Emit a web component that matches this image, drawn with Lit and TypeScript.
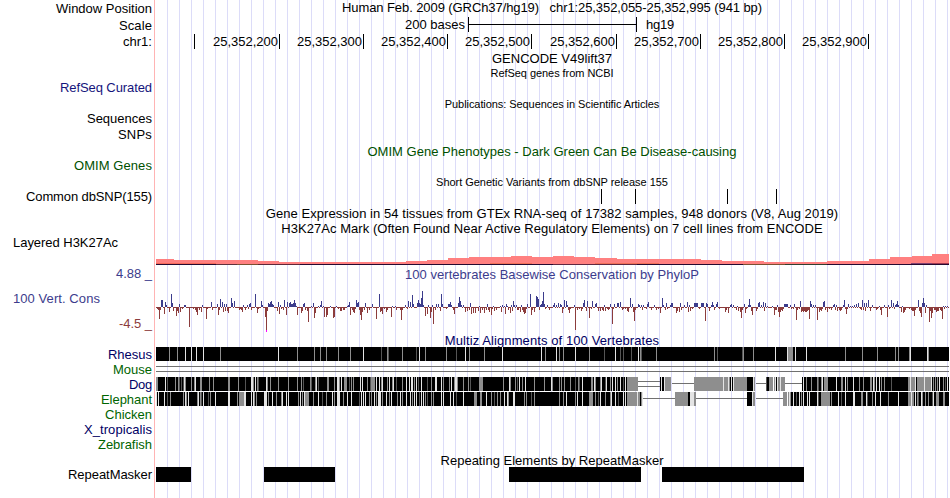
import { LitElement, html, svg, css, nothing } from "lit";
import { customElement } from "lit/decorators.js";

const FONT = '"Liberation Sans", Arial, sans-serif';
const LEFT = 156;
const RIGHT = 949;

const pen = document.createElement("canvas").getContext("2d")!;

/** Letter spacing that makes a text advance over the given width. */
function spacing(text: string, size: number, width: number): string {
  pen.font = `${size}px ${FONT}`;
  const natural = pen.measureText(text).width;
  return `letter-spacing:${((width - natural) / text.length).toFixed(4)}px`;
}

interface Row {
  h: number;
  label?: string;
  lw?: number;
  tone?: string;
  lt?: number;
  title?: string;
  tw?: number;
  small?: boolean;
  tt?: number;
  ttone?: string;
  kind?: string;
}

const ROWS: Row[] = [
  { h: 17, label: "Window Position", lw: 96, title: "Human Feb. 2009 (GRCh37/hg19)   chr1:25,352,055-25,352,995 (941 bp)", tw: 420, tt: -1 },
  { h: 16, label: "Scale", lw: 33, lt: 1, kind: "scale" },
  { h: 17, label: "chr1:", lw: 29, lt: 1, kind: "ruler" },
  { h: 16, title: "GENCODE V49lift37", tw: 120, tt: 1 },
  { h: 14, title: "RefSeq genes from NCBI", tw: 123, small: true },
  { h: 16, label: "RefSeq Curated", lw: 92, tone: "navy" },
  { h: 16, title: "Publications: Sequences in Scientific Articles", tw: 215, small: true },
  { h: 14, label: "Sequences", lw: 65 },
  { h: 17, label: "SNPs", lw: 34 },
  { h: 16, title: "OMIM Gene Phenotypes - Dark Green Can Be Disease-causing", tw: 369, ttone: "green", tt: 1 },
  { h: 14, label: "OMIM Genes", lw: 78, tone: "green" },
  { h: 16, title: "Short Genetic Variants from dbSNP release 155", tw: 232, small: true, tt: 2 },
  { h: 16, label: "Common dbSNP(155)", lw: 126, kind: "snps" },
  { h: 16, title: "Gene Expression in 54 tissues from GTEx RNA-seq of 17382 samples, 948 donors (V8, Aug 2019)", tw: 573, tt: 1 },
  { h: 15, title: "H3K27Ac Mark (Often Found Near Active Regulatory Elements) on 7 cell lines from ENCODE", tw: 542 },
  { h: 14, label: "Layered H3K27Ac", lw: 105, tone: "start" },
  { h: 16, kind: "signal" },
  { h: 16, label: "4.88 _", lw: 36, tone: "blue", title: "100 vertebrates Basewise Conservation by PhyloP", tw: 294, ttone: "blue", tt: 1 },
  { h: 51, kind: "phylop" },
  { h: 14, title: "Multiz Alignments of 100 Vertebrates", tw: 215, ttone: "dark", tt: 1 },
  { h: 15, label: "Rhesus", lw: 44, tone: "dark", kind: "rhesus" },
  { h: 15, label: "Mouse", lw: 39, tone: "forest", kind: "mouse" },
  { h: 15, label: "Dog", lw: 23, tone: "dark", kind: "dog" },
  { h: 15, label: "Elephant", lw: 51, tone: "forest", kind: "elephant" },
  { h: 15, label: "Chicken", lw: 47, tone: "forest" },
  { h: 15, label: "X_tropicalis", lw: 68, tone: "dark" },
  { h: 15, label: "Zebrafish", lw: 54, tone: "forest" },
  { h: 15, title: "Repeating Elements by RepeatMasker", tw: 223, tt: 3 },
  { h: 15, label: "RepeatMasker", lw: 84, kind: "repeats" },
  { h: 16 },
];

/* Conservation scores in four windows of 200 pixels; positions are in thirds of a pixel. */
const SCORES: [number, string][] = [
  [150, "34:7 37:7 46:5 49:2 64:13 67:4 88:3 103:2 106:2 130:1 157:2 184:5 202:3 211:8 217:5 223:3 229:3 244:9 247:4 253:6 271:1 280:2 292:2 298:3 301:4 316:13 334:6 337:2 355:4 358:3 361:5 364:6 367:3 370:2 385:5 391:2 403:7 412:5 418:4 421:5 424:3 427:3 430:4 433:7 436:4 439:1 454:2 460:3 463:4 484:1 490:4 505:1 511:2 514:6 520:1 541:1 559:1 592:1 595:2 598:5 22:-2 25:-3 28:-12 31:-3 43:-7 58:-5 70:-4 79:-9 82:-4 85:-6 91:-5 97:-2 118:-20 130:-2 136:-3 139:-5 142:-8 148:-3 154:-5 169:-12 172:-2 187:-3 205:-8 208:-3 220:-5 226:-4 232:-4 235:-6 268:-3 271:-2 274:-3 277:-5 286:-3 295:-2 304:-3 322:-6 325:-2 346:-10 349:-24 352:-4 382:-4 388:-7 394:-2 400:-3 409:-8 442:-8 454:-6 457:-4 466:-3 472:-4 475:-15 493:-11 496:-6 523:-10 529:-10 532:-8 550:-11 553:-10 565:-2 571:-4 574:-4 580:-3 583:-3"],
  [350, "19:7 22:4 25:5 46:4 67:3 88:13 103:5 112:2 127:1 136:1 151:1 166:2 175:6 181:5 187:12 190:3 202:4 205:7 208:4 211:3 214:9 217:16 220:2 235:2 247:2 256:2 259:3 265:3 274:13 277:3 295:3 298:3 301:5 304:2 325:4 328:10 331:6 334:2 340:2 358:2 361:4 388:1 412:3 430:1 439:4 451:1 457:2 463:1 469:3 472:1 484:2 490:6 493:2 499:2 505:2 514:2 520:1 532:3 541:13 544:3 559:11 562:10 565:8 571:2 574:3 577:6 580:15 583:3 592:2 598:9 1:-8 7:-3 10:-5 13:-6 16:-2 28:-3 31:-8 34:-13 37:-5 43:-3 52:-6 58:-3 79:-12 91:-5 94:-4 97:-7 103:-2 109:-5 112:-3 124:-10 139:-3 151:-3 154:-13 157:-3 172:-2 226:-9 232:-7 241:-11 244:-5 250:-17 256:-3 271:-4 289:-2 310:-3 313:-7 346:-5 352:-4 358:-3 364:-7 370:-6 376:-6 385:-4 391:-6 397:-3 403:-6 409:-3 415:-3 418:-5 424:-8 427:-2 433:-4 439:-3 454:-5 466:-7 475:-3 481:-6 487:-4 502:-3 505:-3 511:-5 517:-3 520:-5 523:-7 526:-6 529:-2 544:-8 547:-3 553:-5 568:-3 586:-2 598:-3"],
  [550, "10:2 13:4 19:2 25:4 31:3 34:2 43:7 49:6 52:2 73:2 100:4 103:7 112:6 118:3 127:6 136:3 139:4 157:1 163:2 172:2 181:3 190:6 193:3 202:4 205:4 211:5 217:3 235:1 241:9 247:3 265:3 268:2 274:2 280:2 292:3 295:5 313:2 325:1 337:9 340:2 349:4 361:2 364:4 367:4 391:4 394:3 403:2 412:5 418:2 433:4 436:4 439:4 442:4 454:4 457:4 460:4 469:4 472:3 484:2 487:5 490:2 499:3 502:5 541:2 544:3 550:2 562:1 571:3 583:3 595:2 598:8 37:-6 40:-2 55:-3 58:-6 61:-2 76:-23 82:-3 88:-2 94:-4 97:-2 109:-4 118:-11 124:-2 145:-4 151:-4 157:-3 160:-4 166:-4 172:-2 175:-3 178:-2 187:-17 190:-2 217:-3 220:-2 226:-2 232:-4 235:-5 250:-5 253:-14 256:-3 277:-3 289:-2 304:-3 319:-3 325:-2 331:-6 346:-3 352:-2 379:-6 382:-4 388:-5 394:-3 415:-5 421:-4 427:-2 448:-2 466:-14 478:-4 493:-3 508:-2 526:-5 529:-3 535:-6 559:-3 565:-4 571:-5 574:-11 577:-3 586:-6 589:-2"],
  [750, "1:2 25:4 28:5 34:2 40:5 46:4 52:1 67:1 82:2 103:3 106:3 109:3 112:3 121:2 133:3 148:2 151:6 181:6 184:3 190:2 196:2 217:2 220:5 223:6 250:2 253:3 259:2 262:2 271:1 280:2 283:7 295:3 301:1 307:1 313:2 319:3 325:4 337:7 343:4 349:4 355:7 361:2 367:2 388:1 403:2 415:2 418:4 424:7 430:4 436:2 439:3 442:6 445:2 457:1 484:1 493:1 505:7 508:2 517:4 520:9 523:4 529:2 541:1 556:2 559:2 562:1 580:1 586:1 592:1 4:-4 7:-8 19:-4 22:-2 43:-4 73:-8 76:-3 79:-3 85:-5 88:-10 91:-5 94:-3 97:-4 100:-2 124:-2 130:-2 139:-13 142:-3 148:-2 154:-5 157:-4 160:-5 163:-4 166:-5 169:-5 172:-4 175:-3 178:-12 202:-13 208:-5 211:-3 214:-4 217:-2 226:-3 232:-5 238:-2 244:-3 256:-3 262:-4 268:-3 271:-4 274:-3 286:-2 289:-7 292:-2 331:-2 334:-3 340:-3 346:-4 361:-4 379:-3 382:-2 391:-3 394:-8 412:-10 418:-2 433:-2 454:-5 460:-6 463:-5 466:-3 478:-2 484:-3 487:-4 490:-4 493:-9 496:-3 508:-4 511:-6 514:-10 526:-6 538:-15 541:-4 544:-11 547:-6 553:-3 556:-3 559:-5 562:-4 565:-4 571:-3 574:-4 577:-12 583:-2"],
];

/* Alignment shading: k solid, g gray, w light, d dim; "position+width shade" in thirds of a pixel. */
const RHESUS: [number, string][] = [
  [150, "18+582k 57g 81g 105w 123w 138w 159w 210g 384w 441g 492g 510g 528g 564g"],
  [350, "0+600k 0g 39w 93d 111g 114d 156g 198d 207w 225g 288g 318d 345w 357g 402g 456w 573w 585g"],
  [550, "0+600k 18w 27g 39g 75w 117g 162d 195w 210d 219d 243d 264w 270g 273d 318g 492g 501d 576d 579g"],
  [750, "0+597k 9g 75w 111w 114+15g 135w 168w 285g 336g 381g 435g 444g 477g 480w 531w 534g"],
];
const DOG: [number, string][] = [
  [150, "18+582k 18+6g 45w 51d 75g 84g 87d 93d 99d 102w 105g 123g 132g 135w 150+6g 177g 189g 234+6g 264g 285d 303+6w 309g 315w 321g 324d 348w 351g 360g 384g 414g 441g 453g 459d 480g 483d 495g 498w 504d 531+6g 552g 561+6w 567g 573w 582+9g 597d"],
  [350, "0+600k 3g 9g 30w 36w 51g 60d 63+12g 78w 87w 93g 96w 111g 117w 126g 129w 138d 156g 168w 177w 183+6w 192g 198w 204d 213w 231d 243g 255+6w 273w 279g 297g 303w 312g 315+6w 321g 339g 354g 360d 387+12g 459g 477w 480g 495g 501d 507w 516g 525w 552g 582g"],
  [550, "0+231k 3w 6g 27g 33g 42g 60g 75d 84g 87d 96w 123+6g 132w 135g 150g 153w 165d 168w 180g 186w 195w 201g 210w 219d 225w 231+33g 330+12k 333w 342w 345+18g 432+87g 519w 522+12g 534w 537+3g 540+3k 543w 546k 549w 552+39g 591+9k"],
  [750, "0+9k 9w 12g 48+9k 48d 54+3k 57g 60+9g 72g 75w 78k 81w 84+21g 90w 156+441k 159w 168g 183g 201g 204d 213g 216w 222g 225+9g 258w 273+6g 285w 291g 309w 327g 339g 360+6g 369w 372g 378w 387w 393g 402g 423d 474+6g 480w 483+12g 495w 498k 501+21g 522w 525+18g 543w 549g 552k 555g 561g 567w 579g 585d 591w"],
];
const ELEPHANT: [number, string][] = [
  [150, "18+582k 18w 24w 42w 51d 60g 99g 105w 108g 114w 141g 144w 150g 153d 159w 174d 180g 195w 234+6w 261g 267+15g 282+6w 303w 309w 312g 318g 342+9w 354g 366w 378g 393g 396w 408w 414w 444g 450w 456g 462w 465+12g 489g 504w 516d 528g 546w 552g 561+9w 579g 591w"],
  [350, "0+600k 3w 27d 33w 39w 45w 57g 63g 72w 78g 84w 87+6w 96g 108w 117g 123w 141g 150w 156g 168w 180w 186g 192w 198w 207d 213w 219w 225g 231d 243g 249g 273w 279w 300w 309w 318d 339w 372+9g 390+6g 408w 423g 432d 441g 450g 462w 471w 474g 489+6w 522g 528g 543d 552g"],
  [550, "0+231k 27g 39g 48w 75g 81w 96w 117+12g 135g 144d 150w 165g 180g 183w 195w 204d 219w 225w 231+30g 261w 264+6g 270+3k 273g 276w 375+39g 414+6k 420+12w 432+6g 591+9k"],
  [750, "0+6k 6w 9+6g 99+12g 114g 117w 120g 123+474k 129w 138d 147w 153g 159w 171w 177w 201w 204d 213g 216+24g 243g 264w 273d 285w 309+6w 333+6g 348w 351d 366g 375w 390w 414g 444w 474+9g 483w 486+6g 495w 501g 504d 513w 516g 525g 534g 546d 549w 558+9g 579+6g"],
];

const SHADES: Record<string, string> = { k: "#000", g: "#8e8e8e", w: "#e4e4e4", d: "#555" };

function stripes(parts: [number, string][], y: number) {
  return parts.flatMap(([origin, text]) =>
    text.split(" ").map((item) => {
      const m = /^(\d+)(?:\+(\d+))?([kgwd])$/.exec(item)!;
      const x = origin + Math.floor(+m[1] / 3);
      const w = m[2] === undefined ? 1 : Math.round(+m[2] / 3);
      return svg`<rect x=${x} y=${y} width=${w} height="14" fill=${SHADES[m[3]]}></rect>`;
    })
  );
}

const line = (x1: number, x2: number, y: number, c = "#707070") =>
  svg`<rect x=${x1} y=${y} width=${x2 - x1} height="1" fill=${c}></rect>`;

/* Start position and top of each step of the acetylation signal. */
const SIGNAL: [number, number][] = [
  [156, 259], [174, 260], [258, 261], [279, 262], [406, 261], [427, 260], [448, 258], [469, 257],
  [511, 256], [532, 257], [553, 256], [574, 257], [595, 258], [617, 259], [701, 260], [722, 261],
  [764, 262], [827, 261], [869, 259], [890, 257], [912, 256], [932, 254],
];

function signal() {
  return svg`
    ${SIGNAL.map(([x, y], i) => {
      const end = i + 1 < SIGNAL.length ? SIGNAL[i + 1][0] : RIGHT;
      return svg`<rect x=${x} y=${y} width=${end - x} height=${264 - y} fill="#ff8080"></rect>`;
    })}
    ${line(156, 216, 263, "#f56a5a")}${line(490, 532, 263, "#f07058")}${line(595, 659, 263, "#f07058")}
    ${line(911, 932, 263, "#804070")}${line(932, 949, 263, "#a03850")}
    ${line(156, RIGHT, 264, "#260a30")}${line(216, 237, 264, "#60303c")}${line(237, 258, 264, "#7c5030")}
    ${line(258, 300, 264, "#602838")}${line(553, 637, 264, "#602840")}${line(743, 785, 264, "#7c5030")}
    ${line(785, 827, 264, "#304030")}`;
}

function phylop() {
  const values = new Map<number, number>();
  for (const [origin, text] of SCORES) {
    for (const pair of text.split(" ")) {
      const [p, v] = pair.split(":").map(Number);
      values.set(origin + Math.floor(p / 3), v);
    }
  }
  let up = "";
  let down = "";
  for (let x = LEFT; x < RIGHT; x++) {
    const v = values.get(x) ?? -1;
    if (v > 0) up += `M${x} ${307 - v}h1v${v}h-1z`;
    else down += `M${x} 307h1v${-v}h-1z`;
  }
  return svg`<path d=${up} fill="#3c3c8c"></path><path d=${down} fill="#8c3c3c"></path>
    <rect x="266" y="330" width="1" height="2" fill="#ff00ff"></rect>`;
}

const TICKS: [number, string][] = [
  [194, ""], [279, "25,352,200"], [363, "25,352,300"], [447, "25,352,400"], [531, "25,352,500"],
  [616, "25,352,600"], [700, "25,352,700"], [784, "25,352,800"], [868, "25,352,900"],
];

const block = (x: number, y: number, w: number, h: number) =>
  svg`<rect x=${x} y=${y} width=${w} height=${h}></rect>`;

const DRAWINGS: Record<string, () => unknown> = {
  scale: () => [block(468, 17, 1, 15), block(636, 17, 1, 15), block(468, 24, 168, 1)],
  ruler: () => TICKS.map(([x]) => block(x, 34, 1, 15)),
  snps: () => [601, 635, 727, 776].map((x) => block(x, 189, 1, 15)),
  signal,
  phylop,
  rhesus: () => stripes(RHESUS, 347),
  mouse: () => [line(LEFT, RIGHT, 366), line(LEFT, RIGHT, 371)],
  dog: () => [
    stripes(DOG, 377),
    line(638, 660, 381), line(638, 660, 386), line(672, 694, 383), line(756, 766, 383), line(785, 802, 383),
  ],
  elephant: () => [stripes(ELEPHANT, 392), line(643, 675, 398), line(696, 747, 398), line(756, 783, 398)],
  repeats: () => [block(156, 467, 35, 15), block(264, 467, 71, 15), block(509, 467, 132, 15), block(662, 467, 142, 15)],
};

@customElement("app-root")
export class AppRoot extends LitElement {
  static styles = css`
    :host {
      display: block;
      width: 950px;
      height: 498px;
      overflow: hidden;
      background: #fff;
      color: #000;
      font-family: "Liberation Sans", Arial, sans-serif;
      font-size: 13px;
    }
    .browser {
      height: 498px;
      background:
        linear-gradient(#ffb4b4, #ffb4b4) 154px 0 / 1px 100% no-repeat,
        repeating-linear-gradient(90deg, #dcdcf8 0 1px, transparent 1px 12px) 167px 0 / 783px 100% no-repeat;
    }
    .row { display: flex; }
    .label {
      box-sizing: border-box;
      width: 156px;
      flex: none;
      padding-right: 4px;
      text-align: right;
      white-space: pre;
    }
    .label.start { text-align: left; padding-left: 13px; }
    .track { display: grid; width: 794px; height: 100%; }
    .track > * { grid-area: 1 / 1; min-width: 0; }
    .title {
      width: 792px;
      text-align: center;
      white-space: pre;
    }
    .small { font-size: 11px; }
    svg { display: block; shape-rendering: crispEdges; }
    .navy { color: #14147c; }
    .dark { color: #000064; }
    .blue { color: #3c3c8c; }
    .maroon { color: #8c3c3c; }
    .green { color: #005000; }
    .forest { color: #006400; }
    .scale { display: grid; grid-template-columns: 312px 1fr; column-gap: 178px; }
    .scale .size { text-align: right; margin-right: 3px; }
    .ruler { display: grid; grid-template-columns: 39px 85px 84px 84px 84px 85px 84px 84px 84px; }
    .ruler .mark { text-align: right; padding-right: 2px; white-space: nowrap; }
    .cons { display: flex; flex-direction: column; line-height: 15px; }
    .cons .name { text-align: left; padding: 9px 0 0 13px; }
    .cons .low { padding-top: 10px; }
  `;

  private drawing(kind: string, y: number, h: number) {
    return html`<svg width="794" height=${h} viewBox="156 ${y} 794 ${h}">${DRAWINGS[kind]()}</svg>`;
  }

  private text(value: string, size: number, width: number) {
    return html`<span style=${spacing(value, size, width)}>${value}</span>`;
  }

  private label(r: Row) {
    if (r.kind === "phylop") {
      return html`<div class="label cons"><div class="name blue">${this.text("100 Vert. Cons", 13, 87)}</div><div class="low maroon">${this.text("-4.5 _", 13, 33)}</div></div>`;
    }
    return html`<div class="label ${r.tone ?? ""}" style="line-height:${r.h + (r.lt ?? 0)}px">${
      r.label ? this.text(r.label, 13, r.lw!) : nothing
    }</div>`;
  }

  private overlay(r: Row) {
    if (r.kind === "scale") {
      return html`<div class="scale" style="line-height:15px">
        <div class="size">${this.text("200 bases", 13, 60)}</div><div>${this.text("hg19", 13, 28)}</div>
      </div>`;
    }
    if (r.kind === "ruler") {
      return html`<div class="ruler" style="line-height:18px">
        ${TICKS.map(([, t]) => html`<div class="mark">${t ? this.text(t, 13, 65) : nothing}</div>`)}
      </div>`;
    }
    if (!r.title) return nothing;
    const size = r.small ? 11 : 13;
    return html`<div
      class="title ${r.small ? "small" : ""} ${r.ttone ?? ""}"
      style="line-height:${r.h + (r.tt ?? 0)}px"
    >${this.text(r.title, size, r.tw!)}</div>`;
  }

  render() {
    let top = 0;
    return html`<div class="browser">
      ${ROWS.map((r) => {
        const y = top;
        top += r.h;
        return html`<div class="row" style="height:${r.h}px">
          ${this.label(r)}
          <div class="track">${r.kind ? this.drawing(r.kind, y, r.h) : nothing}${this.overlay(r)}</div>
        </div>`;
      })}
    </div>`;
  }
}
